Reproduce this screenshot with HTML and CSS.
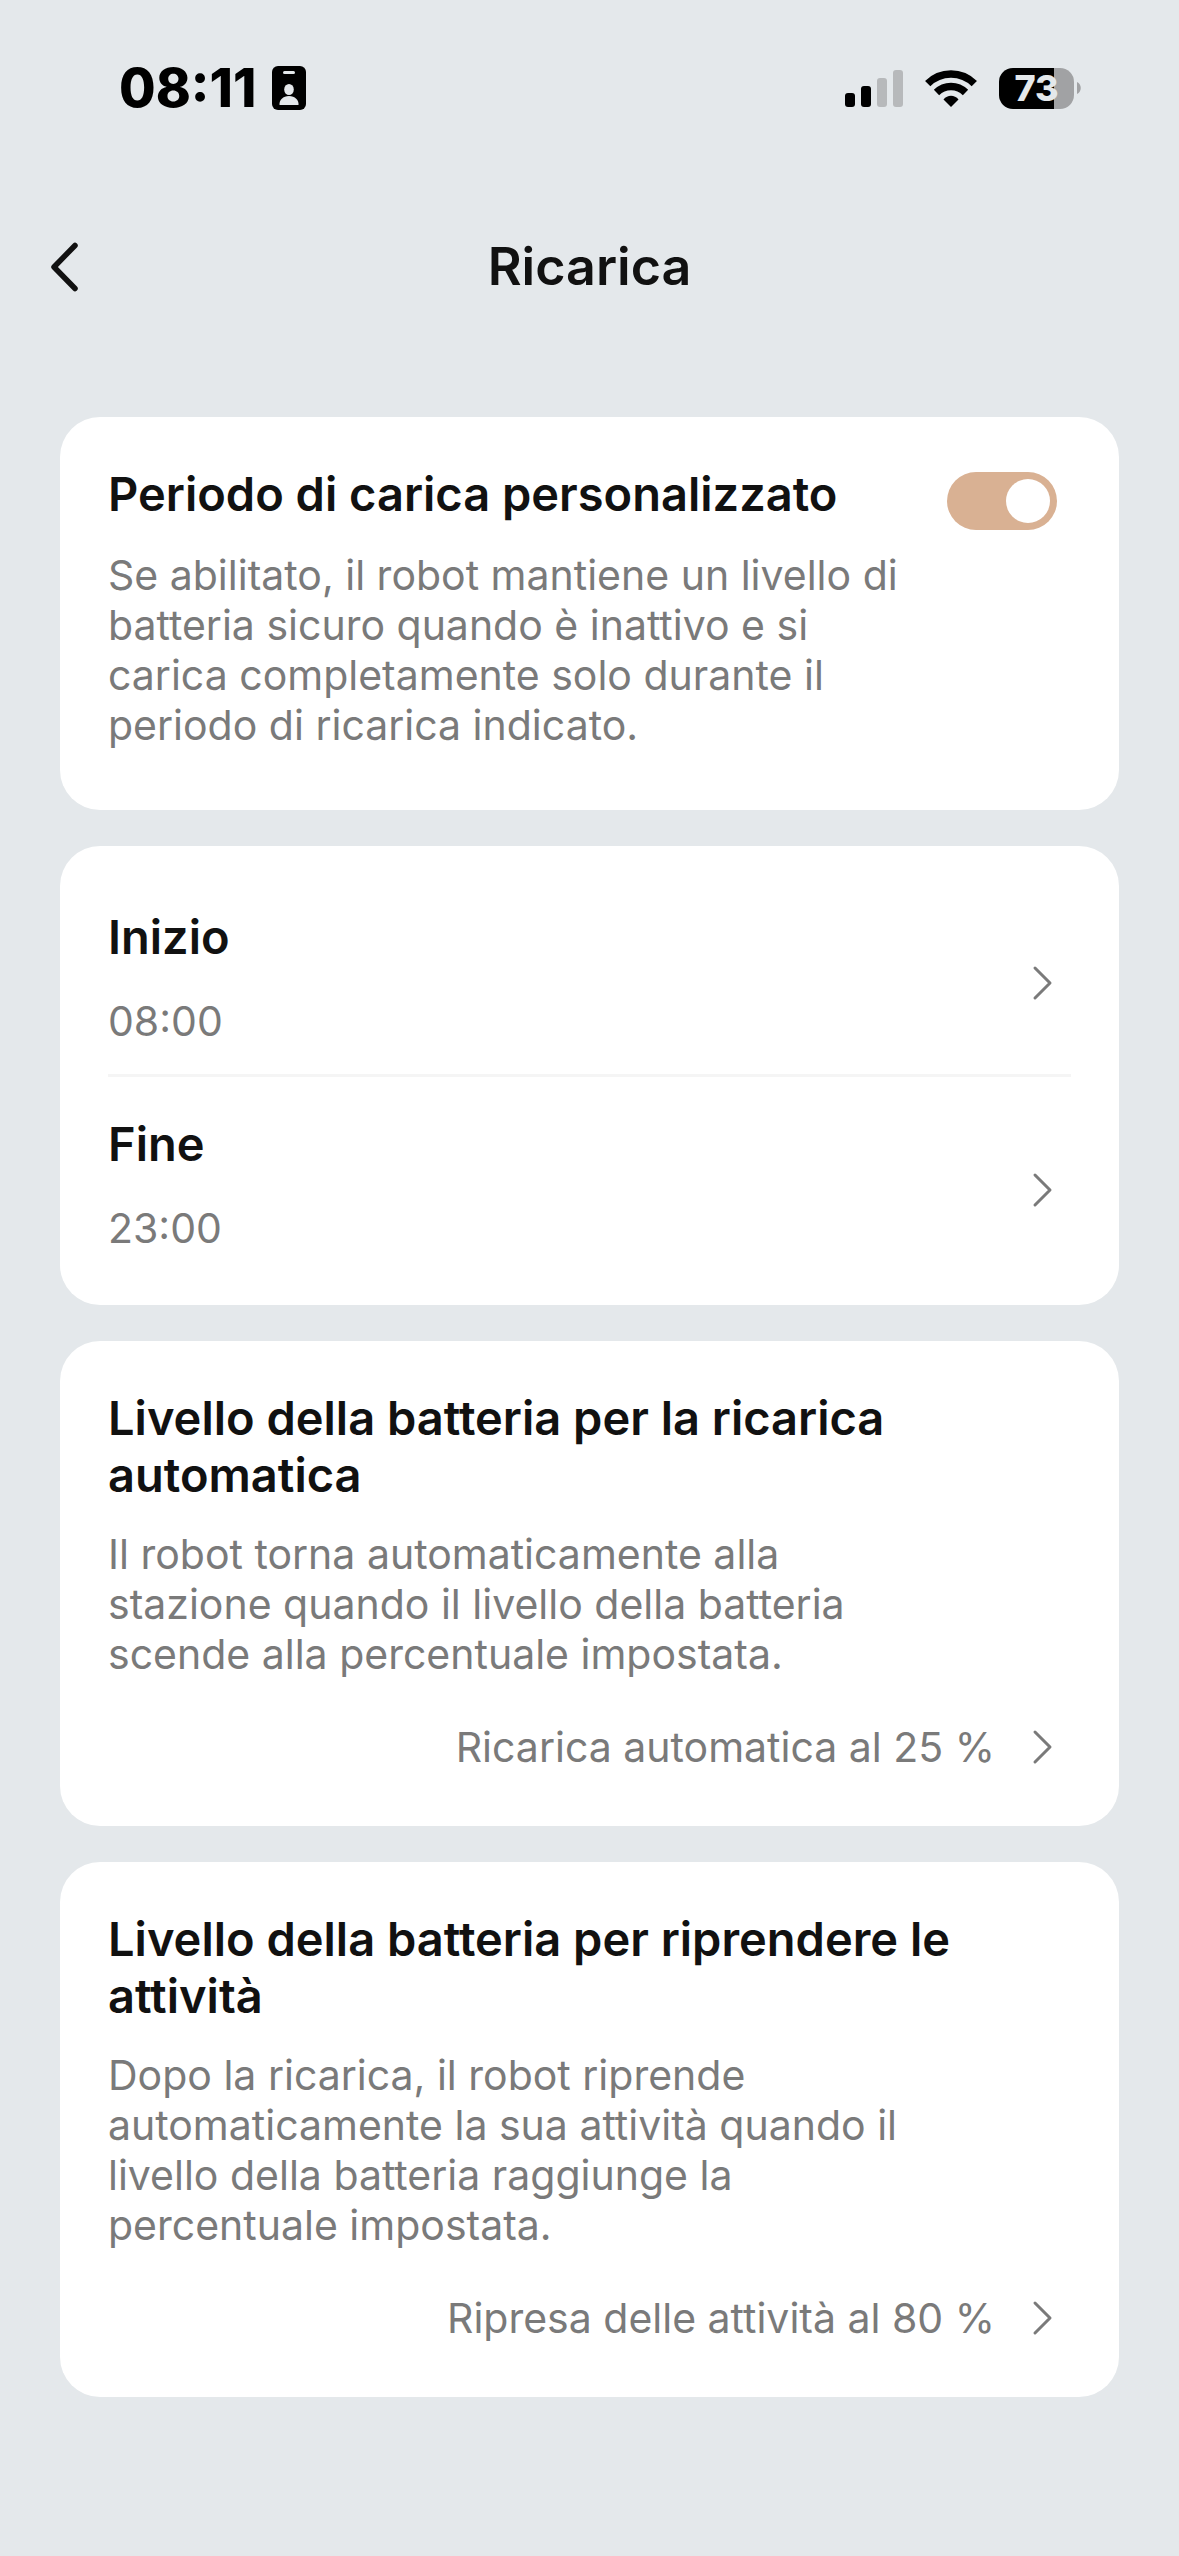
FILE: index.html
```html
<!DOCTYPE html>
<html lang="it">
<head>
    <meta charset="UTF-8">
    <meta name="viewport" content="width=device-width, initial-scale=1.0">
    <title>Ricarica</title>
    <link rel="stylesheet" href="styles.css">
</head>
<body>
    <!-- Barra di stato -->
    <div class="status-bar">
        <div class="status-left">
            <span class="clock">08:11</span>
            <svg class="id-icon" width="34" height="44" viewBox="0 0 34 44">
                <rect width="34" height="44" rx="6" fill="#000"/>
                <rect x="11" y="5" width="12" height="3" rx="1.5" fill="#e4e8eb"/>
                <ellipse cx="17" cy="23.5" rx="4.8" ry="5.5" fill="#e4e8eb"/>
                <path d="M7.5 39 C7 34 11 30 17 30 S27 34 26.500 39 Z" fill="#e4e8eb"/>
            </svg>
        </div>
        <div class="status-right">
            <svg width="58" height="37" viewBox="0 0 58 37">
                <rect x="0" y="23" width="10" height="14" rx="3"/>
                <rect x="16" y="16" width="10" height="21" rx="3"/>
                <rect x="32" y="8" width="10" height="29" rx="3" fill="#b7b9bb"/>
                <rect x="48" y="0" width="10" height="37" rx="3" fill="#b7b9bb"/>
            </svg>
            <svg width="52" height="37" viewBox="0 0 52 37">
                <path d="M26 37 L18.500 29.500 C22.500 24.500 29.500 24.500 33.500 29.500 Z"/>
                <path d="M11.500 22.500 A20.500 20.500 0 0 1 40.500 22.500" fill="none" stroke="#000" stroke-width="7.500"/>
                <path d="M2.700 13.700 A33 33 0 0 1 49.300 13.700" fill="none" stroke="#000" stroke-width="7.500"/>
            </svg>
            <div class="battery">
                <span class="battery-level">73</span>
                <svg width="4" height="12" viewBox="0 0 4 12">
                    <path d="M0 0 C5 2 5 10 0 12 Z" fill="#a1a2a4"/>
                </svg>
            </div>
        </div>
    </div>

    <header class="nav-bar">
        <button class="back-button" type="button" aria-label="Indietro">
            <svg width="30" height="50" viewBox="0 0 30 50">
                <path d="M27 3.500 L6 25 L27 46.500" fill="none" stroke="#111" stroke-width="5.500" stroke-linecap="round" stroke-linejoin="round"/>
            </svg>
        </button>
        <h1>Ricarica</h1>
    </header>

    <main class="cards">
        <!-- Periodo personalizzato -->
        <section class="card">
            <div class="card-head">
                <h2><label for="customPeriod">Periodo di carica personalizzato</label></h2>
                <input class="switch" type="checkbox" id="customPeriod" checked>
            </div>
            <p>Se abilitato, il robot mantiene un livello di batteria sicuro quando è inattivo e si carica completamente solo durante il periodo di ricarica indicato.</p>
        </section>

        <!-- Orari -->
        <section class="card card-list">
            <button class="time-row" type="button">
                <span class="time-text">
                    <span class="row-title">Inizio</span>
                    <span class="row-value">08:00</span>
                </span>
                <svg class="chevron" width="54" height="40" viewBox="0 0 54 40">
                    <path d="M18 5 L33 20 L18 35"/>
                </svg>
            </button>
            <button class="time-row" type="button">
                <span class="time-text">
                    <span class="row-title">Fine</span>
                    <span class="row-value">23:00</span>
                </span>
                <svg class="chevron" width="54" height="40" viewBox="0 0 54 40">
                    <path d="M18 5 L33 20 L18 35"/>
                </svg>
            </button>
        </section>

        <!-- Soglia per la ricarica -->
        <section class="card">
            <h2>Livello della batteria per la ricarica automatica</h2>
            <p>Il robot torna automaticamente alla stazione quando il livello della batteria scende alla percentuale impostata.</p>
            <button class="level-row" type="button">
                <span>Ricarica automatica al 25 %</span>
                <svg class="chevron" width="54" height="40" viewBox="0 0 54 40">
                    <path d="M18 5 L33 20 L18 35"/>
                </svg>
            </button>
        </section>

        <!-- Soglia per riprendere -->
        <section class="card">
            <h2>Livello della batteria per riprendere le attività</h2>
            <p>Dopo la ricarica, il robot riprende automaticamente la sua attività quando il livello della batteria raggiunge la percentuale impostata.</p>
            <button class="level-row" type="button">
                <span>Ripresa delle attività al 80 %</span>
                <svg class="chevron" width="54" height="40" viewBox="0 0 54 40">
                    <path d="M18 5 L33 20 L18 35"/>
                </svg>
            </button>
        </section>
    </main>
</body>
</html>
```
FILE: styles.css
```css
* {
    box-sizing: border-box;
}

body {
    margin: 0;
    min-height: 100vh;
    background-color: #e4e8eb;
    color: #111;
    font-family: 'Inter', sans-serif;
}

h1, h2, p {
    margin: 0;
}

button {
    padding: 0;
    border: none;
    background: none;
    color: inherit;
    font-family: inherit;
    text-align: left;
    cursor: pointer;
}

svg {
    display: block;
    flex-shrink: 0;
}

/* Barra di stato */
.status-bar {
    display: flex;
    justify-content: space-between;
    align-items: center;
    height: 176px;
    padding: 0 98px 0 119px;
    color: #000;
}

.status-left,
.status-right {
    display: flex;
    align-items: center;
    gap: 22px;
}

.status-left {
    gap: 16px;
}

.clock {
    font-size: 53px;
    font-weight: 800;
    line-height: 60px;
}

.battery {
    display: flex;
    align-items: center;
    gap: 3px;
}

.battery-level {
    width: 75px;
    border-radius: 14px;
    background: linear-gradient(90deg, #000 73%, #a1a2a4 73%);
    color: #e4e8eb;
    font-size: 36px;
    font-weight: 800;
    line-height: 41px;
    text-align: center;
}

/* Intestazione */
.nav-bar {
    display: grid;
    grid-template-columns: 60px 1fr 60px;
    align-items: center;
    height: 182px;
    padding: 0 48px;
}

.nav-bar h1 {
    font-size: 52px;
    font-weight: 600;
    line-height: 64px;
    text-align: center;
}

/* Schede */
.cards {
    display: flex;
    flex-direction: column;
    gap: 36px;
    padding: 59px 60px;
}

.card {
    padding: 48px 48px 54px;
    border-radius: 40px;
    background-color: #fff;
}

.card h2,
.row-title {
    color: #111;
    font-size: 47px;
    font-weight: 600;
    line-height: 57px;
}

.card p,
.row-value,
.level-row {
    color: #7a7a7a;
    font-size: 41px;
    line-height: 50px;
}

.card p {
    max-width: 84%;
    margin-top: 26px;
}

.card-head {
    display: flex;
    justify-content: space-between;
    padding-right: 14px;
}

.card .card-head + p {
    margin-top: 20px;
    margin-bottom: 6px;
}

.switch {
    display: flex;
    justify-content: flex-end;
    flex-shrink: 0;
    width: 110px;
    height: 58px;
    margin: 7px 0 0;
    padding: 7px;
    border-radius: 29px;
    background-color: #d9b193;
    appearance: none;
    cursor: pointer;
}

.switch::before {
    content: "";
    width: 44px;
    height: 44px;
    border-radius: 50%;
    background-color: #fff;
}

.switch:not(:checked) {
    justify-content: flex-start;
    background-color: #ccc;
}

/* Righe con freccia */
.card-list {
    padding: 24px 48px;
}

.time-row {
    display: flex;
    justify-content: space-between;
    align-items: center;
    width: 100%;
    padding: 38px 0 28px;
}

.time-row + .time-row {
    border-top: 3px solid #f5f5f5;
}

.time-text {
    display: flex;
    flex-direction: column;
    gap: 31px;
}

.time-row .chevron {
    margin-top: 12px;
}

.level-row {
    display: flex;
    justify-content: flex-end;
    align-items: center;
    gap: 22px;
    width: 100%;
    margin-top: 43px;
}

.chevron path {
    fill: none;
    stroke: #7a7a7a;
    stroke-width: 3;
    stroke-linecap: round;
    stroke-linejoin: round;
}
```
